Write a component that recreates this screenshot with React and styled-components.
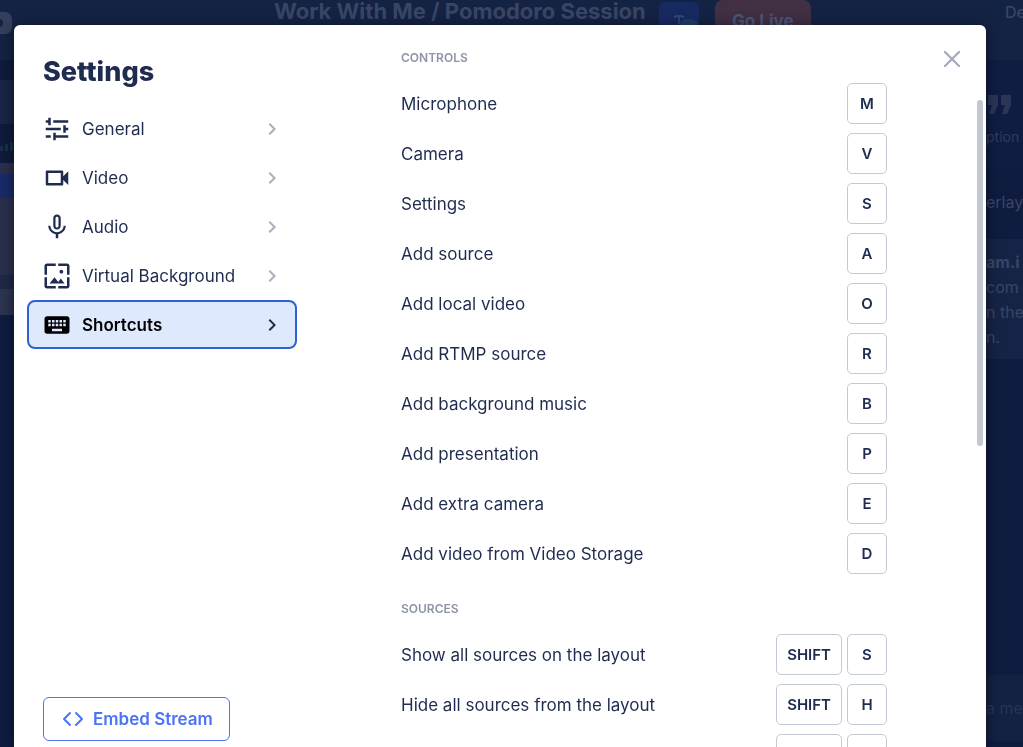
import React from "react";
import styled, { createGlobalStyle } from "styled-components";
import {
  MdChevronRight,
  MdKeyboard,
  MdMicNone,
  MdOutlineVideocam,
  MdWallpaper,
} from "react-icons/md";
import { X } from "lucide-react";

const GlobalStyle = createGlobalStyle`
  * {
    box-sizing: border-box;
  }
  body {
    margin: 0;
    overflow: hidden;
    background: #0f1c40;
    color: #1f2c50;
    font-family: Inter, "Liberation Sans", sans-serif;
  }
  button {
    font-family: inherit;
    color: inherit;
    cursor: pointer;
  }
`;

/* studio behind the dialog */
const Studio = styled.div`
  height: 100vh;
  overflow: hidden;
  display: flex;
  flex-direction: column;
  color: #3a4564;
`;
const TopBar = styled.header`
  display: flex;
  align-items: flex-start;
  height: 60px;
  flex: none;
  background: #142244;
`;
const Logo = styled.div`
  width: 12px;
  height: 22px;
  margin-top: 12px;
  border-radius: 0 7px 7px 0;
  background: #343f5e;
  overflow: hidden;
`;
const StudioTitle = styled.h1`
  margin: 0 13px 0 262px;
  font-size: 22px;
  line-height: 22px;
  font-weight: 700;
  white-space: nowrap;
`;
const TextButton = styled.button`
  width: 40px;
  height: 40px;
  margin-top: 2px;
  padding: 0;
  border: none;
  border-radius: 6px;
  background: #172961;
`;
const LiveButton = styled.button`
  width: 96px;
  height: 42px;
  margin-left: 16px;
  padding: 0;
  border: none;
  border-radius: 8px;
  background: #412f44;
  color: #4a5578;
  font-size: 17px;
  font-weight: 700;
`;
const Account = styled.span`
  flex: none;
  width: 18px;
  margin-left: auto;
  font-size: 16px;
  line-height: 24px;
  font-weight: 500;
  white-space: nowrap;
`;
const StudioBody = styled.div`
  flex: 1;
  display: flex;
  justify-content: space-between;
`;
const Sources = styled.div`
  width: 40px;
  display: flex;
  flex-direction: column;
`;
const Strip = styled.div`
  height: ${(p) => p.$height}px;
  background: ${(p) => p.$color};
`;
const Meter = styled.div`
  height: 39px;
  padding: 0 0 12px 0;
  display: flex;
  align-items: flex-end;
  gap: 2px;
  background: #0f1b3c;
`;
const MeterBar = styled.span`
  width: 3px;
  height: ${(p) => p.$level}px;
  border-radius: 1px;
  background: #173248;
`;
const Panel = styled.div`
  width: 37px;
  display: flex;
  flex-direction: column;
  white-space: nowrap;
`;
const Tab = styled.div`
  height: 110px;
  padding-top: 35px;
  font-size: 14px;
  line-height: 20px;
  background: #101d42;
  color: #303b5d;
  svg {
    display: block;
    margin: 0 0 12px 2px;
  }
`;
const Overlay = styled.div`
  height: 69px;
  padding-top: 20px;
  font-size: 16px;
  line-height: 24px;
`;
const Note = styled.div`
  height: 120px;
  padding-top: 11px;
  background: #152346;
  font-size: 16px;
  line-height: 25px;
`;
const Chat = styled.div`
  height: 66px;
  margin-top: 316px;
  padding-top: 20px;
  background: #142143;
  color: #26345a;
  font-size: 16px;
  line-height: 26px;
`;

/* dialog */
const Backdrop = styled.div`
  position: fixed;
  inset: 0;
  display: flex;
  padding: 25px 37px 0 14px;
`;
const Dialog = styled.div`
  flex: 1;
  display: flex;
  background: #fff;
  border-radius: 6px 6px 0 0;
  box-shadow: 0 2px 14px rgba(0, 0, 0, 0.5);
  overflow: hidden;
`;
const Sidebar = styled.div`
  width: 283px;
  flex: none;
  display: flex;
  flex-direction: column;
  padding: 31px 0 6px 13px;
`;
const Heading = styled.h2`
  margin: 0 0 17px 16px;
  font-size: 27px;
  line-height: 31px;
  font-weight: 800;
`;
const Nav = styled.nav`
  display: flex;
  flex-direction: column;
`;
const NavItem = styled.button`
  display: flex;
  align-items: center;
  height: 49px;
  padding: 0 11px 0 13px;
  border: 2px solid ${(p) => (p.$active ? "#2f62d0" : "transparent")};
  border-radius: 8px;
  background: ${(p) => (p.$active ? "#dfe9fd" : "none")};
  font-size: 17px;
  font-weight: ${(p) => (p.$active ? 600 : 400)};
  color: ${(p) => (p.$active ? "#000" : "#1f2c50")};
  text-align: left;
`;
const NavLabel = styled.span`
  flex: 1;
  margin-left: 10px;
`;
const Chevron = styled(MdChevronRight)`
  color: ${(p) => (p.$active ? "#1f2c50" : "#a9afbf")};
`;
const EmbedButton = styled.button`
  display: flex;
  align-items: center;
  align-self: flex-start;
  gap: 9px;
  height: 44px;
  margin: auto 0 0 16px;
  padding: 0 16px 0 18px;
  border: 1px solid #4a74f5;
  border-radius: 6px;
  background: #fff;
  color: #4a74f5;
  font-size: 17px;
  font-weight: 600;
`;
const Content = styled.div`
  flex: 1;
  min-width: 0;
  padding: 23px 0 0 104px;
  overflow: hidden;
`;
const Group = styled.section`
  margin-bottom: 25px;
`;
const GroupTitle = styled.h3`
  margin: 0 0 15px;
  font-size: 12px;
  line-height: 20px;
  font-weight: 600;
  text-transform: uppercase;
  color: #8d94a8;
`;
const Rows = styled.dl`
  display: grid;
  gap: 9px;
  margin: 0;
`;
const Row = styled.div`
  display: flex;
  align-items: center;
  justify-content: space-between;
`;
const Action = styled.dt`
  font-size: 17px;
  line-height: 20px;
`;
const Keys = styled.dd`
  display: flex;
  gap: 5px;
  margin: 0;
`;
const Key = styled.kbd`
  display: flex;
  align-items: center;
  justify-content: center;
  min-width: 40px;
  height: 41px;
  padding: 0 10px;
  border: 1px solid #c5c9d3;
  border-radius: 5px;
  font-family: inherit;
  font-size: 15px;
  font-weight: 600;
`;
const CloseArea = styled.div`
  width: 90px;
  flex: none;
  padding: 20px 11px 0 0;
  text-align: right;
`;
const CloseButton = styled.button`
  padding: 0;
  border: none;
  background: none;
  color: #a5abbc;
`;
const ScrollTrack = styled.div`
  width: 9px;
  flex: none;
  padding: 75px 3px 0 0;
`;
const ScrollThumb = styled.div`
  height: 346px;
  border-radius: 3px;
  background: #c3c7d1;
`;

const TuneIcon = ({ size }) => (
  <svg width={size} height={size} viewBox="0 0 24 24" fill="currentColor">
    <path d="M3 5h2V3h2v6H5V7H3zM9 5h12v2H9zM3 11h12v2H3zM17 9h2v2h2v2h-2v2h-2zM3 17h4v2H3zM9 15h2v2h10v2H11v2H9z" />
  </svg>
);

const CodeIcon = () => (
  <svg
    width="22"
    height="16"
    viewBox="0 0 22 16"
    fill="none"
    stroke="currentColor"
    strokeWidth="2"
    strokeLinecap="round"
    strokeLinejoin="round"
  >
    <path d="M8 2 2 8l6 6M14 2l6 6-6 6" />
  </svg>
);

const QuoteIcon = () => (
  <svg width="24" height="20" viewBox="0 0 24 20" fill="#2a3557">
    <path d="M0 0h10v10L6 19H1l3-9H0zM13 0h10v10l-4 9h-5l3-9h-4z" />
  </svg>
);

const sections = [
  { label: "General", icon: TuneIcon },
  { label: "Video", icon: MdOutlineVideocam },
  { label: "Audio", icon: MdMicNone },
  { label: "Virtual Background", icon: MdWallpaper },
  { label: "Shortcuts", icon: MdKeyboard },
];

const groups = [
  {
    title: "Controls",
    rows: [
      ["Microphone", ["M"]],
      ["Camera", ["V"]],
      ["Settings", ["S"]],
      ["Add source", ["A"]],
      ["Add local video", ["O"]],
      ["Add RTMP source", ["R"]],
      ["Add background music", ["B"]],
      ["Add presentation", ["P"]],
      ["Add extra camera", ["E"]],
      ["Add video from Video Storage", ["D"]],
    ],
  },
  {
    title: "Sources",
    rows: [
      ["Show all sources on the layout", ["SHIFT", "S"]],
      ["Hide all sources from the layout", ["SHIFT", "H"]],
    ],
  },
];

const StudioPage = () => (
  <Studio>
    <TopBar>
      <Logo>
        <svg width="12" height="22" viewBox="0 0 12 22">
          <circle cx="-1" cy="11" r="4" fill="#142244" />
        </svg>
      </Logo>
      <StudioTitle>Work With Me / Pomodoro Session</StudioTitle>
      <TextButton aria-label="Text">
        <svg width="40" height="40" viewBox="0 0 40 40" fill="none">
          <ellipse cx="30" cy="22" rx="9" ry="5" fill="#1f3c6a" />
          <path d="M16 16v-2h8v2M20 14v8" stroke="#4a5a86" />
        </svg>
      </TextButton>
      <LiveButton>Go Live</LiveButton>
      <Account>De</Account>
    </TopBar>
    <StudioBody>
      <Sources>
        <Strip $height={20} $color="#0e1b3c" />
        <Strip $height={44} $color="#1a2546" />
        <Meter>
          <MeterBar $level={5} />
          <MeterBar $level={7} />
          <MeterBar $level={9} />
        </Meter>
        <Strip $height={11} $color="#29304c" />
        <Strip $height={24} $color="#1a2a6a" />
        <Strip $height={77} $color="#29304c" />
        <Strip $height={14} $color="#1f2947" />
        <Strip $height={26} $color="#2b3450" />
      </Sources>
      <Panel>
        <Tab>
          <QuoteIcon />
          ption
        </Tab>
        <Overlay>erlay</Overlay>
        <Note>
          <strong>am.i</strong>
          <br />
          com
          <br />n the
          <br />
          n.
        </Note>
        <Chat>a me</Chat>
      </Panel>
    </StudioBody>
  </Studio>
);

const App = () => {
  return (
    <>
      <GlobalStyle />
      <StudioPage />
      <Backdrop>
        <Dialog role="dialog" aria-labelledby="settings-title">
          <Sidebar>
            <Heading id="settings-title">Settings</Heading>
            <Nav>
              {sections.map(({ label, icon: Icon }) => {
                const active = label === "Shortcuts";
                return (
                  <NavItem key={label} $active={active}>
                    <Icon size={30} />
                    <NavLabel>{label}</NavLabel>
                    <Chevron size={24} $active={active} />
                  </NavItem>
                );
              })}
            </Nav>
            <EmbedButton>
              <CodeIcon />
              Embed Stream
            </EmbedButton>
          </Sidebar>
          <Content>
            {groups.map((group) => (
              <Group key={group.title}>
                <GroupTitle>{group.title}</GroupTitle>
                <Rows>
                  {group.rows.map(([action, keys]) => (
                    <Row key={action}>
                      <Action>{action}</Action>
                      <Keys>
                        {keys.map((name) => (
                          <Key key={name}>{name}</Key>
                        ))}
                      </Keys>
                    </Row>
                  ))}
                  {group.title === "Sources" && (
                    <Row>
                      <Action />
                      <Keys>
                        <Key>SHIFT</Key>
                        <Key />
                      </Keys>
                    </Row>
                  )}
                </Rows>
              </Group>
            ))}
          </Content>
          <CloseArea>
            <CloseButton aria-label="Close">
              <X size={28} />
            </CloseButton>
          </CloseArea>
          <ScrollTrack>
            <ScrollThumb />
          </ScrollTrack>
        </Dialog>
      </Backdrop>
    </>
  );
};

export default App;
